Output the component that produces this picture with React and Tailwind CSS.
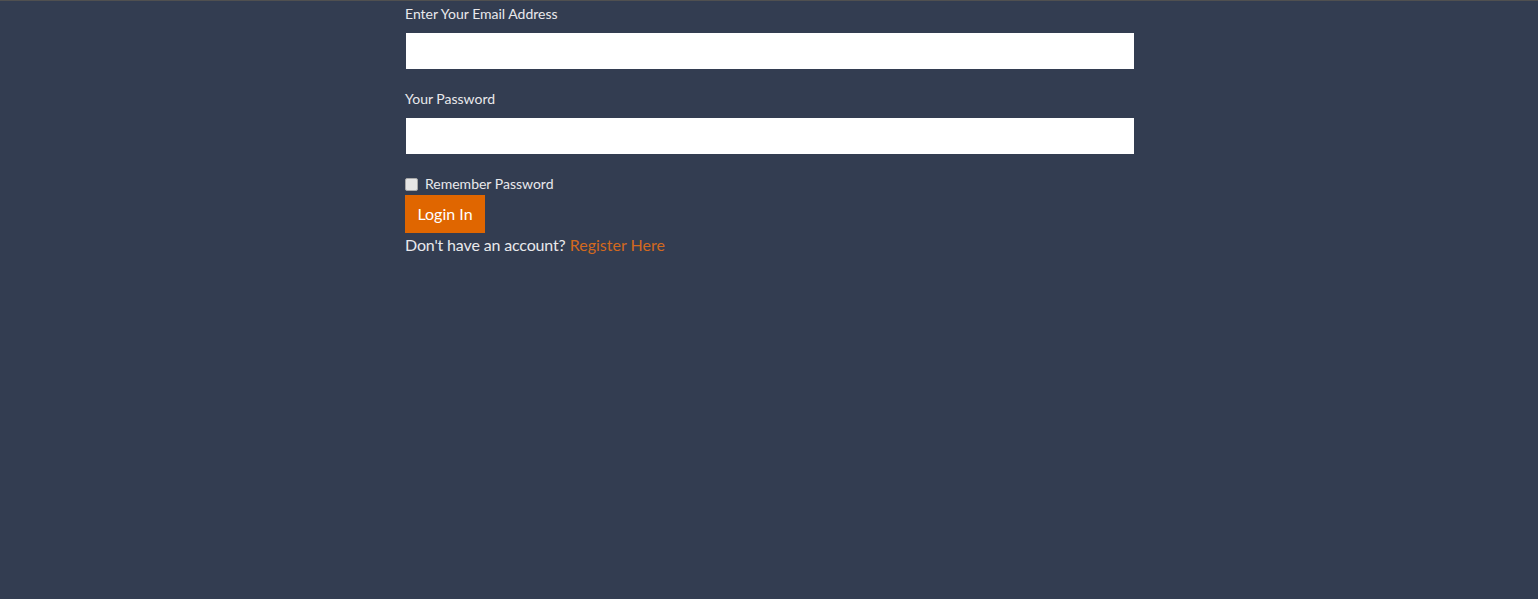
import React from "react";

const App = () => {
  return (
    <div
      className="min-h-[599px] w-full bg-[#333d51] border-t border-[#505050] pl-[2px]"
      style={{ fontFamily: "Lato, 'Open Sans', sans-serif" }}
    >
      <form className="w-[730px] mx-auto pt-[3px]">
        <div className="mb-[19px]">
          <label className="block text-sm leading-5 text-[#e9e9ec] mb-2">
            Enter Your Email Address
          </label>
          <input
            type="email"
            className="block w-full h-[38px] bg-white border border-[#333d51] outline-none"
          />
        </div>
        <div className="mb-[19px]">
          <label className="block text-sm leading-5 text-[#e9e9ec] mb-2">
            Your Password
          </label>
          <input
            type="password"
            className="block w-full h-[38px] bg-white border border-[#333d51] outline-none"
          />
        </div>
        <div className="flex items-center gap-[7px] h-5 text-sm text-[#e9e9ec]">
          <input
            type="checkbox"
            className="appearance-none w-[13px] h-[13px] mt-[1px] rounded-[2px] bg-[#e6e6e6] border border-[#a9a9a9]"
          />
          <span>Remember Password</span>
        </div>
        <button
          type="button"
          className="mt-[1px] block w-[80px] h-[38px] bg-[#e06600] text-white text-base text-center"
        >
          Login In
        </button>
        <p className="mt-[2px] text-base leading-5 text-[#e9e9ec]">
          <span className="tracking-[-0.15px]">Don't have an account?</span>{" "}
          <a href="#" className="text-[#d2691e]">
            Register Here
          </a>
        </p>
      </form>
    </div>
  );
};

export default App;
